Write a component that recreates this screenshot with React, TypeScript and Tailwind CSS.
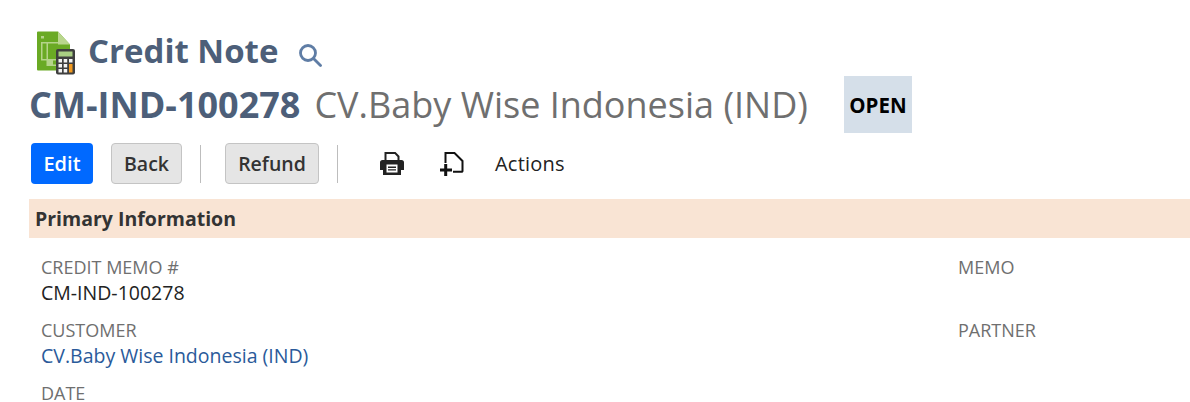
import React from 'react';

const fields = [
    { label: 'Credit Memo #', value: 'CM-IND-100278', link: false, side: 'Memo' },
    { label: 'Customer', value: 'CV.Baby Wise Indonesia (IND)', link: true, side: 'Partner' },
    { label: 'Date', value: '', link: false, side: '' },
];

function RecordIcon() {
    return (
        <svg width="40" height="44" viewBox="0 0 40 44" className="shrink-0">
            <path d="M1 1.500a1 1 0 0 1 1-1h20l12 13v25a1 1 0 0 1-1 1H2a1 1 0 0 1-1-1z" fill="#6aaa24" />
            <path d="M22 .5l12 13H22z" fill="#b9d68d" />
            <path d="M5 5h3v2.500H5zM5 11h17v1.500H12V28h10v1.500h-5v4h8V35H10.500v-5.500H5zM6.500 12.500V28h4V12.500z" fill="#b5d48a" fillRule="evenodd" />
            <rect x="20" y="18" width="19" height="25.500" rx="2" fill="#3f3f3f" />
            <rect x="22.500" y="20.500" width="14" height="5" fill="#a9cf83" />
            <path d="M22.500 28h3.500v3.500h-3.500zM27.700 28h3.500v3.500h-3.500zM22.500 33h3.500v3.500h-3.500zM27.700 33h3.500v3.500h-3.500zM22.500 38h3.500v3.500h-3.500zM27.700 38h3.500v3.500h-3.500z" fill="#f4f4f4" />
            <rect x="33" y="28" width="3.500" height="3.500" fill="#f4f4f4" />
            <rect x="33" y="33" width="3.500" height="8.500" fill="#f29a1f" />
        </svg>
    );
}

function PrintIcon() {
    return (
        <svg width="24" height="24" viewBox="0 0 24 24">
            <path d="M5.500 9V.900h9.500l3.500 3.600V9" fill="none" stroke="#222" strokeWidth="2" />
            <path d="M2.500 8h19A2.500 2.500 0 0 1 24 10.500V18h-3v5H3v-5H0v-7.500A2.500 2.500 0 0 1 2.500 8z" fill="#222" />
            <rect x="6.500" y="12.500" width="11" height="8" fill="#fff" />
            <path d="M8 14.500h8v1.400H8zM8 17.200h8v1.400H8z" fill="#222" />
        </svg>
    );
}

function NewRecordIcon() {
    return (
        <svg width="24" height="24" viewBox="0 0 24 24">
            <path d="M5.500 11V1h9l8 8v10a.8.8 0 0 1-.8.800H13" fill="none" stroke="#111" strokeWidth="2" />
            <path d="M4.200 12h3v4.500H12v3H7.200V24h-3v-4.500H0v-3h4.200z" fill="#111" />
        </svg>
    );
}

function Divider() {
    return <div className="mx-[18px] h-[38px] w-px bg-[#bdbdbd]" />;
}

export default function App() {
    return (
        <div className="h-[402px] overflow-hidden bg-white pl-[29px] font-['Open_Sans',sans-serif]">
            <div className="flex items-center pl-[7px] pt-[31px]">
                <RecordIcon />
                <h1 className="ml-3 -mt-1 text-[33px] leading-[42px] font-bold text-[#4d5f79]">Credit Note</h1>
                <svg width="24" height="24" viewBox="0 0 24 24" className="ml-5 mt-1" fill="none" stroke="#5f7da5" strokeWidth="2.800">
                    <circle cx="10" cy="10" r="7.500" />
                    <path d="M15.500 15.500l7 7" strokeLinecap="round" />
                </svg>
            </div>

            <div className="flex h-[58px] items-center">
                <span className="mt-0.5 text-[36px] font-bold text-[#4d5f79]">CM-IND-100278</span>
                <span className="ml-[14px] mt-0.5 text-[36px] text-[#6f6f6f]">CV.Baby Wise Indonesia (IND)</span>
                <span className="ml-9 flex h-[57px] w-[68px] items-center justify-center bg-[#d5dfe9] pt-0.5 text-[20.500px] font-bold text-black">OPEN</span>
            </div>

            <div className="mt-[10px] flex h-[41px] items-center pl-0.5">
                <button className="h-[41px] w-[62px] rounded bg-[#0069ff] text-[20px] font-semibold text-white">Edit</button>
                <button className="ml-[18px] h-[41px] w-[71px] rounded border border-[#c4c4c4] bg-[#e5e5e5] text-[19.500px] font-semibold text-[#333]">Back</button>
                <Divider />
                <button className="ml-1.5 h-[41px] w-[94px] rounded border border-[#c4c4c4] bg-[#e5e5e5] text-[19.500px] font-semibold text-[#333]">Refund</button>
                <Divider />
                <div className="ml-6 flex items-center">
                    <PrintIcon />
                    <div className="ml-9"><NewRecordIcon /></div>
                    <span className="ml-[31px] text-[20px] font-medium tracking-[0.2px] text-[#222]">Actions</span>
                </div>
            </div>

            <div className="mt-[15px] flex h-[39px] items-center bg-[#f9e4d4] pl-1.5 text-[19.500px] font-bold text-[#333]">
                Primary Information
            </div>

            <div className="mt-[18px] flex flex-col gap-[11px] pl-3">
                {fields.map((f) => (
                    <div key={f.label} className="flex h-[52px]">
                        <div className="w-[917px]">
                            <div className="text-[18px] leading-[22px] text-[#6f6f6f] uppercase">{f.label}</div>
                            {f.value && (
                                <div className={`text-[19.500px] leading-[29px] ${f.link ? 'text-[#2a5a9a]' : 'text-[#222]'}`}>{f.value}</div>
                            )}
                        </div>
                        <div className="text-[18px] leading-[22px] text-[#6f6f6f] uppercase">{f.side}</div>
                    </div>
                ))}
            </div>
        </div>
    );
}
